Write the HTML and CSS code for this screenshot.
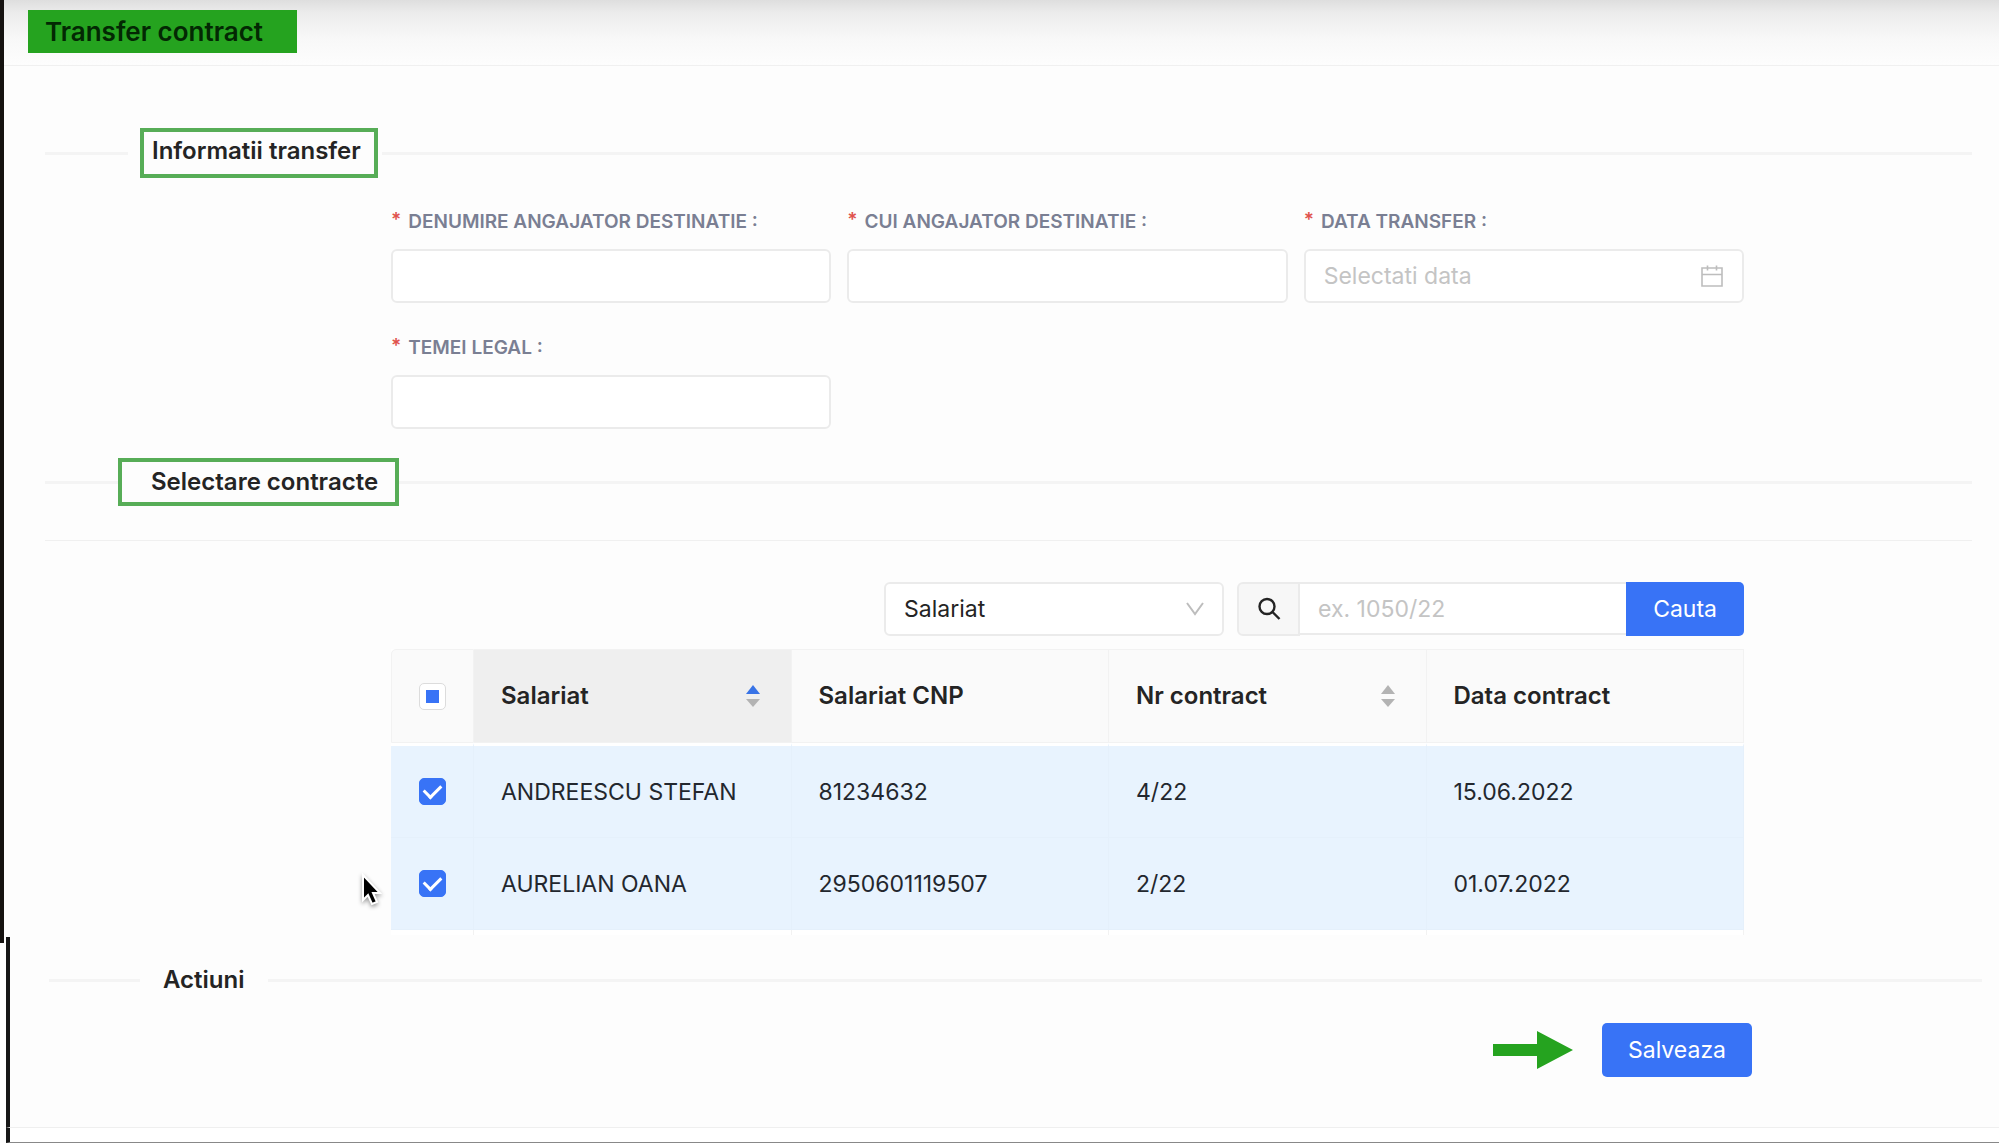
FILE: index.html
```html
<!DOCTYPE html>
<html lang="ro">
<head>
<meta charset="utf-8">
<meta name="viewport" content="width=device-width, initial-scale=1">
<title>Transfer contract</title>
<link rel="stylesheet" href="styles.css">
</head>
<body>
<main class="panel">
  <header class="page-header">
    <h1 class="page-title">Transfer contract</h1>
  </header>

  <div class="panel-body">
    <div class="divider divider-spaced">
      <h2 class="divider-title boxed">Informatii transfer</h2>
    </div>

    <form class="transfer-form">
      <div class="field">
        <label class="label" for="employer"><span class="required">*</span>DENUMIRE ANGAJATOR DESTINATIE :</label>
        <input class="input" id="employer" type="text" required>
      </div>
      <div class="field">
        <label class="label" for="cui"><span class="required">*</span>CUI ANGAJATOR DESTINATIE :</label>
        <input class="input" id="cui" type="text" required>
      </div>
      <div class="field">
        <label class="label" for="date"><span class="required">*</span>DATA TRANSFER :</label>
        <div class="with-icon">
          <input class="input" id="date" type="text" placeholder="Selectati data" required>
          <svg class="field-icon calendar" viewBox="0 0 24 24" fill="none" stroke="currentColor" stroke-width="1.600" aria-hidden="true"><path d="M2 4h20v18H2zM2 10.500h20M7.500 1.500v5M16.500 1.500v5"/></svg>
        </div>
      </div>
      <div class="field">
        <label class="label" for="legal"><span class="required">*</span>TEMEI LEGAL :</label>
        <input class="input" id="legal" type="text" required>
      </div>
    </form>

    <div class="divider">
      <h2 class="divider-title boxed boxed-wide">Selectare contracte</h2>
    </div>
    <hr class="rule">

    <section class="contracts">
      <div class="toolbar">
        <div class="with-icon search-by">
          <select class="input select" aria-label="Cauta dupa">
            <option>Salariat</option>
            <option>Nr contract</option>
          </select>
          <svg class="field-icon chevron" viewBox="0 0 18 14" fill="none" stroke="currentColor" stroke-width="2" aria-hidden="true"><path d="M1 1l8 11 8-11"/></svg>
        </div>
        <div class="search">
          <span class="search-addon">
            <svg class="search-icon" viewBox="0 0 24 24" fill="none" stroke="currentColor" stroke-width="2.400" aria-hidden="true"><circle cx="10" cy="9.500" r="7.500"/><path d="M15.500 15l7 7"/></svg>
          </span>
          <input class="search-input" type="text" placeholder="ex. 1050/22" aria-label="Cauta contract">
          <button class="button search-button" type="button">Cauta</button>
        </div>
      </div>

      <table class="table">
        <colgroup><col class="col-check"><col><col><col><col></colgroup>
        <thead>
          <tr>
            <th class="check-cell"><input class="checkbox partial" type="checkbox" aria-label="Selecteaza tot"></th>
            <th class="sorted"><div class="head">Salariat
              <svg class="sorter" viewBox="0 0 14 24" aria-hidden="true"><path class="sort-on" d="M7 1l7 9H0z"/><path class="sort-off" d="M7 23l7-8H0z"/></svg></div></th>
            <th>Salariat CNP</th>
            <th><div class="head">Nr contract
              <svg class="sorter" viewBox="0 0 14 24" aria-hidden="true"><path class="sort-off" d="M7 1l7 9H0z"/><path class="sort-off" d="M7 23l7-8H0z"/></svg></div></th>
            <th>Data contract</th>
          </tr>
        </thead>
        <tbody>
          <tr>
            <td class="check-cell"><input class="checkbox" type="checkbox" checked aria-label="ANDREESCU STEFAN"></td>
            <td>ANDREESCU STEFAN</td>
            <td>81234632</td>
            <td>4/22</td>
            <td>15.06.2022</td>
          </tr>
          <tr>
            <td class="check-cell"><input class="checkbox" type="checkbox" checked aria-label="AURELIAN OANA"></td>
            <td>AURELIAN OANA</td>
            <td>2950601119507</td>
            <td>2/22</td>
            <td>01.07.2022</td>
          </tr>
        </tbody>
        <tfoot>
          <tr aria-hidden="true"><td></td><td></td><td></td><td></td><td></td></tr>
        </tfoot>
      </table>
      <svg class="cursor" viewBox="0 0 22 34" aria-hidden="true"><path d="M3 2v25l5-5 4 9 5-2-4-9h7z" fill="#000" stroke="#fff" stroke-width="2"/></svg>
    </section>
  </div>
</main>

<section class="actions-panel">
  <div class="divider divider-plain">
    <h2 class="divider-title">Actiuni</h2>
  </div>
  <div class="actions">
    <svg class="arrow" viewBox="0 0 80 38" aria-hidden="true"><path d="M0 13h44V0l36 19-36 19V25H0z"/></svg>
    <button class="button" type="button">Salveaza</button>
  </div>
</section>
<footer class="page-foot"></footer>
</body>
</html>
```
FILE: styles.css
```css
* {
  box-sizing: border-box;
}

body {
  margin: 0;
  background: #fdfdfd;
  color: #242424;
  font-family: Inter, "Liberation Sans", sans-serif;
  font-size: 23px;
  line-height: 30px;
}

h1,
h2 {
  margin: 0;
  font-weight: 600;
}

input,
select,
button {
  margin: 0;
  font: inherit;
  color: inherit;
}

.panel {
  border-left: 4px solid #151210;
  padding-bottom: 8px;
}

.page-header {
  display: flex;
  padding: 10px 24px 12px;
  border-bottom: 1px solid #f0f0f0;
  background: linear-gradient(#dedede, #ececec 20%, #f8f8f8 60%, #fdfdfd);
}

.page-title {
  padding: 7px 34px 6px 17px;
  background: #25a31f;
  color: #032803;
  font-size: 26px;
}

.panel-body {
  padding: 0 27px 0 41px;
}

/* Section headings set into a horizontal line */
.divider {
  display: flex;
  align-items: center;
}

.divider::before,
.divider::after {
  content: "";
  height: 3px;
  background: #f4f4f4;
}

.divider::before {
  width: 73px;
}

.divider::after {
  flex: 1;
}

.divider-title {
  font-size: 24px;
}

.boxed {
  padding: 4px 13px 8px 8px;
  border: 4px solid #57ad57;
}

.boxed-wide {
  padding: 5px 17px 5px 29px;
}

.divider-spaced {
  padding-top: 62px;
}

.divider-spaced::before {
  width: 83px;
  margin-right: 12px;
}

.divider-spaced::after {
  margin-left: 4px;
}

/* Form */
.transfer-form {
  display: grid;
  grid-template-columns: repeat(3, 1fr);
  gap: 32px 16px;
  padding: 31px 228px 29px 346px;
}

.field {
  display: flex;
  flex-direction: column;
  gap: 14px;
}

.label {
  display: flex;
  gap: 7px;
  color: #7a7f93;
  font-size: 19px;
  font-weight: 600;
  line-height: 26px;
}

.required {
  color: #e0524c;
  line-height: 22px;
}

.input {
  width: 100%;
  height: 54px;
  padding: 0 18px;
  border: 2px solid #ebebeb;
  border-radius: 6px;
  background: #fff;
}

::placeholder {
  color: #c4c4c4;
  opacity: 1;
}

.with-icon {
  position: relative;
}

.field-icon {
  position: absolute;
  top: 0;
  bottom: 0;
  right: 20px;
  margin: auto;
  color: #bdbdbd;
  pointer-events: none;
}

.calendar {
  width: 24px;
  height: 24px;
}

.chevron {
  width: 18px;
  height: 14px;
}

.rule {
  height: 1px;
  margin: 34px 0 41px;
  border: 0;
  background: #f0f0f0;
}

/* Contract list */
.contracts {
  position: relative;
  margin: 0 228px 0 346px;
}

.toolbar {
  display: flex;
  justify-content: flex-end;
  gap: 13px;
  margin-bottom: 13px;
}

.search-by {
  flex: 0 1 340px;
}

.select {
  appearance: none;
}

.search {
  display: flex;
  align-items: flex-start;
  flex: 0 1 507px;
  min-width: 0;
}

.search-addon {
  display: flex;
  align-items: center;
  justify-content: center;
  flex: none;
  width: 63px;
  height: 54px;
  border: 2px solid #ebebeb;
  border-radius: 6px 0 0 6px;
  background: #f7f7f7;
}

.search-icon {
  width: 24px;
  height: 24px;
}

.search-input {
  flex: 1;
  min-width: 0;
  height: 53px;
  padding: 0 18px;
  border: solid #ebebeb;
  border-width: 2px 0;
  background: #fff;
}

.button {
  height: 54px;
  padding: 0 26px;
  border: 0;
  border-radius: 5px;
  background: #3873f6;
  color: #fff;
}

.search-button {
  padding: 0 27px;
  border-radius: 0 5px 5px 0;
}

.table {
  width: 100%;
  table-layout: fixed;
  border-collapse: separate;
  border-spacing: 0;
  background: #fff;
}

.col-check {
  width: 83px;
}

.table th,
.table td {
  padding: 0 27px;
  text-align: left;
}

.table th {
  height: 94px;
  border: solid #f2f2f2;
  border-width: 1px 1px 1px 0;
  background: #fafafa;
  font-size: 24px;
  font-weight: 600;
}

.table th:first-child {
  border-left-width: 1px;
  border-top-left-radius: 5px;
}

.table th.sorted {
  background: #efefef;
}

.table tbody td {
  height: 92px;
  border: solid #e5f0fb;
  border-width: 0 1px 1px 0;
  background: #e8f3fe;
  color: #23272e;
}

.table tbody tr:first-child td {
  height: 95px;
  border-top: 3px solid #fff;
}

.table tfoot td {
  height: 5px;
  border-right: 1px solid #f2f2f2;
  background: #fff;
}

.table .check-cell {
  padding: 0;
}

.head {
  display: flex;
  align-items: center;
  justify-content: space-between;
}

.sorter {
  width: 14px;
  height: 24px;
  margin-right: 4px;
}

.sort-on {
  fill: #3873e6;
}

.sort-off {
  fill: #b3b3b3;
}

.checkbox {
  appearance: none;
  display: grid;
  place-items: center;
  width: 27px;
  height: 27px;
  margin: 0 auto;
  border: 1px solid #dcdcdc;
  border-radius: 5px;
  background: #fff;
}

.checkbox:checked {
  border-color: #3873f6;
  background: #3873f6;
}

.checkbox:checked::before {
  content: "";
  width: 8px;
  height: 14px;
  margin-bottom: 4px;
  border: solid #fff;
  border-width: 0 3px 3px 0;
  transform: rotate(45deg);
}

.partial::before {
  content: "";
  width: 13px;
  height: 13px;
  background: #3873f6;
}

.cursor {
  position: absolute;
  left: -31px;
  bottom: 28px;
  width: 22px;
  height: 34px;
  filter: drop-shadow(0 2px 2px rgba(0, 0, 0, 0.4));
}

/* Actions */
.actions-panel {
  margin: -6px 0 0 6px;
  padding: 28px 17px 50px 39px;
  border-left: 4px solid #151515;
  border-bottom: 1px solid #efefef;
}

.divider-plain {
  gap: 23px;
}

.divider-plain::before {
  width: 91px;
}

.actions {
  display: flex;
  align-items: center;
  justify-content: flex-end;
  gap: 29px;
  padding: 28px 230px 0 0;
}

.arrow {
  width: 80px;
  height: 38px;
  fill: #25a31f;
}

.page-foot {
  height: 15px;
  margin-left: 6px;
  border-left: 4px solid #151515;
  border-bottom: 1px solid #888;
  background: #fff;
}
```
